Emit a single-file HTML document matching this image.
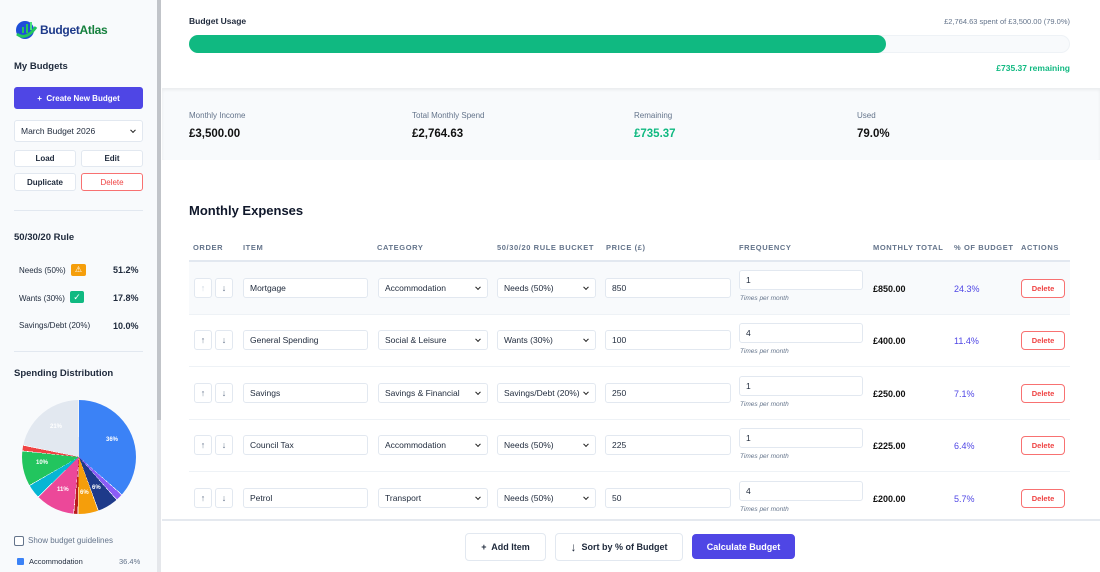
<!DOCTYPE html>
<html><head><meta charset="utf-8"><style>
*{box-sizing:border-box;margin:0;padding:0}
body{width:1100px;height:572px;overflow:hidden;font-family:"Liberation Sans","DejaVu Sans",sans-serif;background:#fff;position:relative;color:#1e293b}
.a{position:absolute}
.sb{left:0;top:0;width:157px;height:572px;background:#f8fafc}
.scroll{left:157px;top:0;width:4px;height:572px;background:#e5e7eb}
.thumb{left:157px;top:0;width:4px;height:420px;background:#c1c4c9}
.btn{position:absolute;background:#fff;border:1px solid #e2e8f0;border-radius:3px;font-size:8px;font-weight:bold;color:#1e293b;display:flex;align-items:center;justify-content:center}
.sel{position:absolute;background:#fff;border:1px solid #e2e8f0;border-radius:3px;font-size:8.5px;color:#1e293b;display:flex;align-items:center;padding-left:6px}
.sel:after{content:"";position:absolute;right:7px;top:50%;width:3px;height:3px;border-right:1.5px solid #222;border-bottom:1.5px solid #222;transform:translateY(-70%) rotate(45deg)}
.inp{position:absolute;background:#fff;border:1px solid #e2e8f0;border-radius:3px;font-size:8.5px;color:#1e293b;display:flex;align-items:center;padding-left:6px}
.th{position:absolute;top:243px;font-size:7.5px;font-weight:bold;color:#64748b;letter-spacing:.6px}
.ob{position:absolute;width:18px;height:20px;border:1px solid #e2e8f0;border-radius:3px;background:#fff;font-size:9px;color:#64748b;display:flex;align-items:center;justify-content:center}
.del{position:absolute;left:1021px;width:44px;height:19px;border:1px solid #f87171;border-radius:4px;background:#fff;color:#ef4444;font-size:7.5px;font-weight:bold;display:flex;align-items:center;justify-content:center}
.tpm{position:absolute;left:740px;font-size:6.5px;font-style:italic;color:#64748b}
.mt{position:absolute;left:873px;font-size:9px;font-weight:bold;color:#111}
.pc{position:absolute;left:954px;font-size:9px;color:#4f46e5}
.lbl{position:absolute;font-size:8px;color:#64748b;top:111px}
.val{position:absolute;font-size:11.5px;font-weight:bold;color:#111;top:128px}
.pl{position:absolute;font-size:6px;font-weight:bold;color:#fff}
</style></head><body>
<div class="a sb"></div>
<div class="a scroll"></div><div class="a thumb"></div>
<!-- logo -->
<svg class="a" style="left:14px;top:19px" width="24" height="22" viewBox="0 0 24 22"><circle cx="11" cy="11" r="9" fill="#1d4ed8"/><path d="M3 15 Q12 22 22 8" stroke="#22c55e" stroke-width="3" fill="none"/><rect x="8" y="8" width="2" height="6" fill="#22c55e"/><rect x="12" y="5" width="2" height="9" fill="#22c55e"/><rect x="16" y="3" width="2" height="8" fill="#4ade80"/></svg>
<div class="a" style="left:40px;top:23px;font-size:12px;font-weight:bold;letter-spacing:-.3px;color:#1e3a8a">Budget<span style="color:#15803d">Atlas</span></div>
<div class="a" style="left:14px;top:61px;font-size:9.5px;font-weight:bold">My Budgets</div>
<div class="btn" style="left:14px;top:87px;width:129px;height:22px;background:#4f46e5;border-color:#4f46e5;color:#fff;font-size:8px">+&nbsp; Create New Budget</div>
<div class="sel" style="left:14px;top:120px;width:129px;height:22px">March Budget 2026</div>
<div class="btn" style="left:14px;top:150px;width:62px;height:17px">Load</div>
<div class="btn" style="left:81px;top:150px;width:62px;height:17px">Edit</div>
<div class="btn" style="left:14px;top:173px;width:62px;height:18px">Duplicate</div>
<div class="btn" style="left:81px;top:173px;width:62px;height:18px;border-color:#f87171;color:#ef4444;font-weight:normal">Delete</div>
<div class="a" style="left:14px;top:210px;width:129px;height:1px;background:#e2e8f0"></div>
<div class="a" style="left:14px;top:232px;font-size:9.5px;font-weight:bold">50/30/20 Rule</div>
<div class="a" style="left:19px;top:266px;font-size:8px">Needs (50%)</div>
<div class="a" style="left:71px;top:264px;width:15px;height:12px;background:#f59e0b;border-radius:2px;color:#fff;font-size:8px;text-align:center;line-height:12px">⚠</div>
<div class="a" style="left:113px;top:265px;font-size:9px;font-weight:bold">51.2%</div>
<div class="a" style="left:19px;top:294px;font-size:8px">Wants (30%)</div>
<div class="a" style="left:70px;top:291px;width:14px;height:12px;background:#10b981;border-radius:2px;color:#fff;font-size:9px;text-align:center;line-height:12px">✓</div>
<div class="a" style="left:113px;top:293px;font-size:9px;font-weight:bold">17.8%</div>
<div class="a" style="left:19px;top:321px;font-size:8px">Savings/Debt (20%)</div>
<div class="a" style="left:113px;top:321px;font-size:9px;font-weight:bold">10.0%</div>
<div class="a" style="left:14px;top:351px;width:129px;height:1px;background:#e2e8f0"></div>
<div class="a" style="left:14px;top:368px;font-size:9.5px;font-weight:bold">Spending Distribution</div>
<div class="a" style="left:22px;top:400px;width:114px;height:114px;border-radius:50%;background:conic-gradient(#3b82f6 0 36.4%,#fff 36.4% 36.6%,#8b5cf6 36.6% 38.4%,#fff 38.4% 38.6%,#1e3a8a 38.6% 44.4%,#fff 44.4% 44.6%,#f59e0b 44.6% 50.2%,#fff 50.2% 50.4%,#b91c1c 50.4% 51.4%,#fff 51.4% 51.6%,#ec4899 51.6% 62.6%,#fff 62.6% 62.8%,#06b6d4 62.8% 66.6%,#fff 66.6% 66.8%,#22c55e 66.8% 76.6%,#fff 76.6% 76.8%,#ef4444 76.8% 78.2%,#fff 78.2% 78.4%,#e2e8f0 78.4% 99.8%,#fff 99.8%)"></div>
<div class="pl" style="left:106px;top:437px">36%</div>
<div class="pl" style="left:92px;top:485px">6%</div>
<div class="pl" style="left:80px;top:490px">6%</div>
<div class="pl" style="left:57px;top:487px">11%</div>
<div class="pl" style="left:36px;top:460px">10%</div>
<div class="pl" style="left:50px;top:424px">21%</div>
<div class="a" style="left:14px;top:536px;width:10px;height:10px;border:1px solid #64748b;border-radius:2px;background:#fff"></div>
<div class="a" style="left:28px;top:536px;font-size:8px;color:#64748b">Show budget guidelines</div>
<div class="a" style="left:17px;top:558px;width:7px;height:7px;background:#3b82f6;border-radius:1px"></div>
<div class="a" style="left:29px;top:557px;font-size:7.5px">Accommodation</div>
<div class="a" style="left:119px;top:557px;font-size:7.5px;color:#64748b">36.4%</div>

<!-- top card -->
<div class="a" style="left:162px;top:88px;width:938px;height:72px;background:#f8fafc;box-shadow:inset 0 2px 3px rgba(0,0,0,.06)"></div>
<div class="a" style="left:189px;top:16px;font-size:8.5px;font-weight:bold">Budget Usage</div>
<div class="a" style="right:30px;top:17px;font-size:7.5px;color:#64748b">£2,764.63 spent of £3,500.00 (79.0%)</div>
<div class="a" style="left:189px;top:35px;width:881px;height:18px;border-radius:9px;background:#f8fafc;border:1px solid #eef2f6"></div>
<div class="a" style="left:189px;top:35px;width:697px;height:18px;border-radius:9px;background:#10b981"></div>
<div class="a" style="right:30px;top:63px;font-size:8.5px;font-weight:bold;color:#10b981">£735.37 remaining</div>
<div class="lbl" style="left:189px">Monthly Income</div><div class="val" style="left:189px">£3,500.00</div>
<div class="lbl" style="left:412px">Total Monthly Spend</div><div class="val" style="left:412px">£2,764.63</div>
<div class="lbl" style="left:634px">Remaining</div><div class="val" style="left:634px;color:#10b981">£735.37</div>
<div class="lbl" style="left:857px">Used</div><div class="val" style="left:857px">79.0%</div>

<div class="a" style="left:189px;top:203px;font-size:13px;font-weight:bold;color:#0f172a">Monthly Expenses</div>
<div class="th" style="left:193px">ORDER</div>
<div class="th" style="left:243px">ITEM</div>
<div class="th" style="left:377px">CATEGORY</div>
<div class="th" style="left:497px">50/30/20 RULE BUCKET</div>
<div class="th" style="left:606px">PRICE (£)</div>
<div class="th" style="left:739px">FREQUENCY</div>
<div class="th" style="left:873px">MONTHLY TOTAL</div>
<div class="th" style="left:954px">% OF BUDGET</div>
<div class="th" style="left:1021px">ACTIONS</div>
<div class="a" style="left:189px;top:260px;width:881px;height:2px;background:#e2e8f0"></div>
<div class="a" style="left:189px;top:262px;width:881px;height:52px;background:#f8fafc"></div>
<div class="a" style="left:189px;top:314px;width:881px;height:1px;background:#eef2f6"></div>
<div class="a" style="left:189px;top:366px;width:881px;height:1px;background:#eef2f6"></div>
<div class="a" style="left:189px;top:419px;width:881px;height:1px;background:#eef2f6"></div>
<div class="a" style="left:189px;top:471px;width:881px;height:1px;background:#eef2f6"></div>

<!-- rows: y offsets 278,330,383,435,488 -->
<div class="ob" style="left:194px;top:278px;color:#cbd5e1">↑</div><div class="ob" style="left:215px;top:278px">↓</div>
<div class="inp" style="left:243px;top:278px;width:125px;height:20px">Mortgage</div>
<div class="sel" style="left:378px;top:278px;width:110px;height:20px">Accommodation</div>
<div class="sel" style="left:497px;top:278px;width:99px;height:20px">Needs (50%)</div>
<div class="inp" style="left:605px;top:278px;width:126px;height:20px">850</div>
<div class="inp" style="left:739px;top:270px;width:124px;height:20px">1</div>
<div class="tpm" style="top:295px">Times per month</div>
<div class="mt" style="top:284px">£850.00</div><div class="pc" style="top:284px">24.3%</div>
<div class="del" style="top:279px">Delete</div>

<div class="ob" style="left:194px;top:330px">↑</div><div class="ob" style="left:215px;top:330px">↓</div>
<div class="inp" style="left:243px;top:330px;width:125px;height:20px">General Spending</div>
<div class="sel" style="left:378px;top:330px;width:110px;height:20px">Social &amp; Leisure</div>
<div class="sel" style="left:497px;top:330px;width:99px;height:20px">Wants (30%)</div>
<div class="inp" style="left:605px;top:330px;width:126px;height:20px">100</div>
<div class="inp" style="left:739px;top:323px;width:124px;height:20px">4</div>
<div class="tpm" style="top:348px">Times per month</div>
<div class="mt" style="top:336px">£400.00</div><div class="pc" style="top:336px">11.4%</div>
<div class="del" style="top:331px">Delete</div>

<div class="ob" style="left:194px;top:383px">↑</div><div class="ob" style="left:215px;top:383px">↓</div>
<div class="inp" style="left:243px;top:383px;width:125px;height:20px">Savings</div>
<div class="sel" style="left:378px;top:383px;width:110px;height:20px">Savings &amp; Financial</div>
<div class="sel" style="left:497px;top:383px;width:99px;height:20px">Savings/Debt (20%)</div>
<div class="inp" style="left:605px;top:383px;width:126px;height:20px">250</div>
<div class="inp" style="left:739px;top:376px;width:124px;height:20px">1</div>
<div class="tpm" style="top:401px">Times per month</div>
<div class="mt" style="top:389px">£250.00</div><div class="pc" style="top:389px">7.1%</div>
<div class="del" style="top:384px">Delete</div>

<div class="ob" style="left:194px;top:435px">↑</div><div class="ob" style="left:215px;top:435px">↓</div>
<div class="inp" style="left:243px;top:435px;width:125px;height:20px">Council Tax</div>
<div class="sel" style="left:378px;top:435px;width:110px;height:20px">Accommodation</div>
<div class="sel" style="left:497px;top:435px;width:99px;height:20px">Needs (50%)</div>
<div class="inp" style="left:605px;top:435px;width:126px;height:20px">225</div>
<div class="inp" style="left:739px;top:428px;width:124px;height:20px">1</div>
<div class="tpm" style="top:453px">Times per month</div>
<div class="mt" style="top:441px">£225.00</div><div class="pc" style="top:441px">6.4%</div>
<div class="del" style="top:436px">Delete</div>

<div class="ob" style="left:194px;top:488px">↑</div><div class="ob" style="left:215px;top:488px">↓</div>
<div class="inp" style="left:243px;top:488px;width:125px;height:20px">Petrol</div>
<div class="sel" style="left:378px;top:488px;width:110px;height:20px">Transport</div>
<div class="sel" style="left:497px;top:488px;width:99px;height:20px">Needs (50%)</div>
<div class="inp" style="left:605px;top:488px;width:126px;height:20px">50</div>
<div class="inp" style="left:739px;top:481px;width:124px;height:20px">4</div>
<div class="tpm" style="top:506px">Times per month</div>
<div class="mt" style="top:494px">£200.00</div><div class="pc" style="top:494px">5.7%</div>
<div class="del" style="top:489px">Delete</div>

<!-- bottom bar -->
<div class="a" style="left:162px;top:519px;width:938px;height:53px;background:#fff;border-top:2px solid #e5e9ef"></div>
<div class="btn" style="left:465px;top:533px;width:81px;height:28px;font-size:9px;border-radius:4px">+&nbsp; Add Item</div>
<div class="btn" style="left:555px;top:533px;width:128px;height:28px;font-size:9px;border-radius:4px"><span style="font-size:12px;font-weight:normal;margin-right:5px">↓</span>Sort by % of Budget</div>
<div class="btn" style="left:692px;top:534px;width:103px;height:25px;font-size:9px;border-radius:4px;background:#4f46e5;border-color:#4f46e5;color:#fff">Calculate Budget</div>
</body></html>
